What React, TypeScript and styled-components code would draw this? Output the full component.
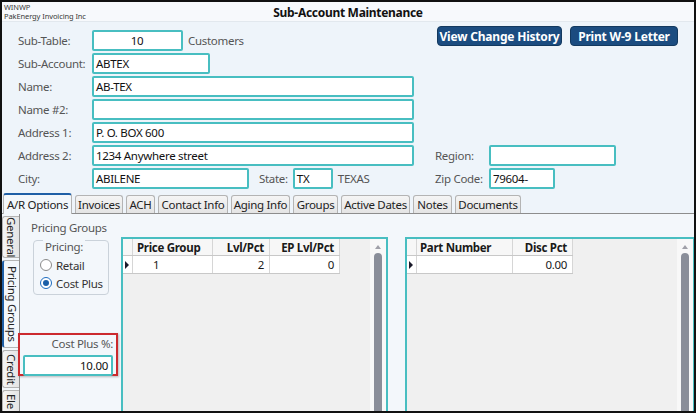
import React from "react";
import styled, { createGlobalStyle } from "styled-components";

const FONT = `"Noto Sans", "Open Sans", "DejaVu Sans", sans-serif`;
const TEAL = "#48bec1";

const Global = createGlobalStyle`
  html, body { margin: 0; padding: 0; background: #ffffff; }
  * { box-sizing: border-box; }
`;

const Window = styled.div`
  width: 696px;
  height: 413px;
  border: 2px solid #111;
  background: #eef4fa;
  display: flex;
  flex-direction: column;
  overflow: hidden;
  font-family: ${FONT};
  font-size: 11.5px;
  letter-spacing: -0.3px;
  color: #1e1e1e;
`;

const TitleBar = styled.div`
  height: 20px;
  flex: none;
  display: grid;
  grid-template-columns: 1fr auto 1fr;
  align-items: center;
  background: #f7f9fc;
  border-bottom: 1px solid #e2e8ee;
  padding: 0 2px;
`;

const AppInfo = styled.div`
  display: flex;
  flex-direction: column;
  font-size: 7.5px;
  line-height: 9px;
  letter-spacing: -0.1px;
  color: #3a3a3a;
`;

const Title = styled.div`
  font-weight: 700;
  font-size: 12px;
  color: #111;
  letter-spacing: -0.3px;
  padding-top: 1px;
`;

const FormGrid = styled.div`
  display: grid;
  grid-template-columns: 74px 343px 54px 1fr;
  grid-auto-rows: 21px;
  row-gap: 2px;
  padding: 8px 0 0 16px;
  flex: none;
`;

const Label = styled.div`
  display: flex;
  align-items: center;
  color: #555;
  white-space: nowrap;
`;

const Cell = styled.div<{ $span?: number }>`
  display: flex;
  align-items: center;
  gap: 5px;
  grid-column: span ${(p) => p.$span ?? 1};
`;

const Field = styled.div<{ $w: number; $align?: string }>`
  width: ${(p) => p.$w}px;
  height: 21px;
  flex: none;
  border: 2px solid ${TEAL};
  border-radius: 2px;
  background: #fff;
  display: flex;
  align-items: center;
  justify-content: ${(p) => p.$align ?? "flex-start"};
  padding: 0 3px 0 2px;
  color: #111;
  white-space: nowrap;
`;

const Muted = styled.span<{ $ml?: number }>`
  color: #555;
  margin-left: ${(p) => p.$ml ?? 0}px;
`;

const ButtonBar = styled.div`
  grid-column: 3 / span 2;
  align-self: start;
  margin-top: -4px;
  margin-left: 2px;
  display: flex;
  gap: 8px;
`;

const ActionButton = styled.div<{ $w: number }>`
  width: ${(p) => p.$w}px;
  height: 20px;
  border-radius: 4px;
  background: #1b4c80;
  border: 1px solid #13395f;
  color: #fff;
  font-weight: 700;
  font-size: 12px;
  display: flex;
  align-items: center;
  justify-content: center;
  white-space: nowrap;
  letter-spacing: -0.2px;
`;

const TabStrip = styled.div`
  margin-top: 4px;
  height: 21px;
  flex: none;
  display: flex;
  align-items: flex-end;
  gap: 3px;
  padding-left: 1px;
  border-bottom: 1px solid #8d8d8d;
`;

const Tab = styled.div<{ $w: number; $active?: boolean }>`
  width: ${(p) => p.$w}px;
  height: ${(p) => (p.$active ? 21 : 18)}px;
  margin-bottom: ${(p) => (p.$active ? -1 : 0)}px;
  border: 1px solid #b4b4b4;
  border-bottom: none;
  border-top: ${(p) => (p.$active ? "2px solid #1f5fa6" : "1px solid #b4b4b4")};
  border-radius: 3px 3px 0 0;
  background: ${(p) => (p.$active ? "#f3f7fb" : "linear-gradient(#f5f5f5, #e4e4e4)")};
  display: flex;
  align-items: center;
  justify-content: center;
  color: #222;
  white-space: nowrap;
`;

const TabBody = styled.div`
  flex: 1;
  display: flex;
  background: #f3f7fb;
  min-height: 0;
`;

const SideTabs = styled.div`
  width: 18px;
  flex: none;
  display: flex;
  flex-direction: column;
  gap: 2px;
  padding-top: 2px;
  border-right: 1px solid #8d8d8d;
  overflow: hidden;
`;

const SideTab = styled.div<{ $h: number; $active?: boolean; $open?: boolean }>`
  height: ${(p) => p.$h}px;
  flex: none;
  writing-mode: vertical-rl;
  display: flex;
  align-items: center;
  justify-content: ${(p) => (p.$open ? "flex-start" : "center")};
  padding-top: ${(p) => (p.$open ? 3 : 0)}px;
  border: 1px solid #b4b4b4;
  border-right: none;
  border-left: ${(p) => (p.$active ? "2px solid #1f5fa6" : "1px solid #b4b4b4")};
  border-radius: 3px 0 0 3px;
  background: ${(p) => (p.$active ? "#f3f7fb" : "linear-gradient(90deg, #f5f5f5, #e4e4e4)")};
  margin-right: ${(p) => (p.$active ? -1 : 0)}px;
  color: #222;
  white-space: nowrap;
  line-height: 14px;
  overflow: hidden;
`;

const PricingPanel = styled.div`
  width: 101px;
  flex: none;
  display: flex;
  flex-direction: column;
  padding: 7px 0 0 0;
`;

const PanelHeading = styled.div`
  color: #555;
  line-height: 14px;
  padding-left: 11px;
`;

const GroupBox = styled.fieldset`
  margin: -8px 0 0 13px;
  width: 76px;
  padding: 3px 0 2px 6px;
  border: 1px solid #cad2da;
  border-radius: 4px;
  display: flex;
  flex-direction: column;
  min-width: 0;
`;

const Legend = styled.legend`
  padding: 14px 2px 0 2px;
  margin-left: 3px;
  line-height: 12px;
  color: #555;
`;

const RadioRow = styled.div`
  height: 18px;
  display: flex;
  align-items: center;
  gap: 4px;
  color: #333;
`;

const RadioDot = styled.span<{ $on?: boolean }>`
  width: 12px;
  height: 12px;
  flex: none;
  border-radius: 50%;
  border: 1px solid ${(p) => (p.$on ? "#1c6cc0" : "#8a8a8a")};
  background: #fff;
  display: flex;
  align-items: center;
  justify-content: center;
  &::after {
    content: "";
    width: 6px;
    height: 6px;
    border-radius: 50%;
    background: ${(p) => (p.$on ? "#1a5fa8" : "transparent")};
  }
`;

const HighlightBox = styled.div`
  margin: 38px 0 0 -2px;
  width: 100px;
  height: 43px;
  border: 2px solid #cc2a2e;
  box-shadow: 1px 1px 2px rgba(0, 0, 0, 0.25);
  display: flex;
  flex-direction: column;
  align-items: flex-end;
  padding: 1px 3px 0 5px;
  gap: 4px;
`;

const GridsRow = styled.div`
  flex: 1;
  display: flex;
  gap: 17px;
  padding-top: 23px;
  min-width: 0;
`;

const DataGrid = styled.div<{ $w: number }>`
  width: ${(p) => p.$w}px;
  flex: none;
  border: 2px solid ${TEAL};
  border-bottom: none;
  background: #f0f0f0;
  display: flex;
`;

const TableArea = styled.div`
  flex: 1;
  display: flex;
  flex-direction: column;
`;

const Row = styled.div<{ $head?: boolean }>`
  display: flex;
  height: ${(p) => (p.$head ? 17 : 18)}px;
  background: ${(p) => (p.$head ? "#f7f7f7" : "#fff")};
  font-weight: ${(p) => (p.$head ? 700 : 400)};
  align-self: flex-start;
  border-bottom: 1px solid #c8c8c8;
`;

const GridCell = styled.div<{ $w: number; $align?: string; $pad?: number }>`
  width: ${(p) => p.$w}px;
  flex: none;
  display: flex;
  align-items: center;
  justify-content: ${(p) => p.$align ?? "flex-start"};
  padding: 0 ${(p) => p.$pad ?? 5}px;
  border-right: 1px solid #d6d6d6;
  white-space: nowrap;
  color: #1a1a1a;
`;

const Indicator = styled.div`
  width: 10px;
  flex: none;
  display: flex;
  align-items: center;
  justify-content: center;
  border-right: 1px solid #d6d6d6;
`;

const Arrow = styled.span`
  width: 0;
  height: 0;
  border-top: 4px solid transparent;
  border-bottom: 4px solid transparent;
  border-left: 4px solid #1a1a2a;
  margin-left: -1px;
`;

const ScrollBar = styled.div`
  width: 16px;
  flex: none;
  background: #f8f8f8;
  display: flex;
  flex-direction: column;
  align-items: center;
  padding-top: 6px;
  gap: 4px;
`;

const UpArrow = styled.span`
  width: 0;
  height: 0;
  border-left: 3.5px solid transparent;
  border-right: 3.5px solid transparent;
  border-bottom: 4px solid #a0a0a8;
`;

const Thumb = styled.div`
  width: 8px;
  flex: 1;
  background: #8a8e99;
  border-radius: 4px 4px 0 0;
`;

type Col = { title: string; w: number; align?: string; pad?: number; value: string };

const grid1: Col[] = [
  { title: "Price Group", w: 80, value: "1", pad: 4 },
  { title: "Lvl/Pct", w: 57, align: "flex-end", value: "2" },
  { title: "EP Lvl/Pct", w: 70, align: "flex-end", value: "0" },
];
const grid2: Col[] = [
  { title: "Part Number", w: 96, value: "", pad: 3 },
  { title: "Disc Pct", w: 60, align: "flex-end", value: "0.00" },
];

function Grid({ w, cols, firstPad }: { w: number; cols: Col[]; firstPad?: number }) {
  return (
    <DataGrid $w={w}>
      <TableArea>
        <Row $head>
          <Indicator />
          {cols.map((c) => (
            <GridCell key={c.title} $w={c.w} $align={c.align} $pad={c.pad}>
              {c.title}
            </GridCell>
          ))}
        </Row>
        <Row>
          <Indicator>
            <Arrow />
          </Indicator>
          {cols.map((c, i) => (
            <GridCell key={c.title} $w={c.w} $align={c.align} $pad={i === 0 ? firstPad ?? c.pad : c.pad}>
              {c.value}
            </GridCell>
          ))}
        </Row>
      </TableArea>
      <ScrollBar>
        <UpArrow />
        <Thumb />
      </ScrollBar>
    </DataGrid>
  );
}

const tabs: [string, number][] = [
  ["A/R Options", 69],
  ["Invoices", 48],
  ["ACH", 29],
  ["Contact Info", 70],
  ["Aging Info", 59],
  ["Groups", 45],
  ["Active Dates", 69],
  ["Notes", 39],
  ["Documents", 66],
];

export default function App() {
  return (
    <>
      <Global />
      <Window>
        <TitleBar>
          <AppInfo>
            <span>WINWP</span>
            <span>PakEnergy Invoicing Inc</span>
          </AppInfo>
          <Title>Sub-Account Maintenance</Title>
          <span />
        </TitleBar>

        <FormGrid>
          <Label>Sub-Table:</Label>
          <Cell>
            <Field $w={91} $align="center">10</Field>
            <Muted>Customers</Muted>
          </Cell>
          <ButtonBar>
            <ActionButton $w={125}>View Change History</ActionButton>
            <ActionButton $w={108}>Print W-9 Letter</ActionButton>
          </ButtonBar>

          <Label>Sub-Account:</Label>
          <Cell $span={3}>
            <Field $w={118}>ABTEX</Field>
          </Cell>

          <Label>Name:</Label>
          <Cell $span={3}>
            <Field $w={322}>AB-TEX</Field>
          </Cell>

          <Label>Name #2:</Label>
          <Cell $span={3}>
            <Field $w={322} />
          </Cell>

          <Label>Address 1:</Label>
          <Cell $span={3}>
            <Field $w={322}>P. O. BOX 600</Field>
          </Cell>

          <Label>Address 2:</Label>
          <Cell>
            <Field $w={322}>1234 Anywhere street</Field>
          </Cell>
          <Label>Region:</Label>
          <Cell>
            <Field $w={127} />
          </Cell>

          <Label>City:</Label>
          <Cell>
            <Field $w={157}>ABILENE</Field>
            <Muted $ml={5}>State:</Muted>
            <Field $w={40}>TX</Field>
            <Muted>TEXAS</Muted>
          </Cell>
          <Label>Zip Code:</Label>
          <Cell>
            <Field $w={66}>79604-</Field>
          </Cell>
        </FormGrid>

        <TabStrip>
          {tabs.map(([t, w], i) => (
            <Tab key={t} $w={w} $active={i === 0}>
              {t}
            </Tab>
          ))}
        </TabStrip>

        <TabBody>
          <SideTabs>
            <SideTab $h={42}>General</SideTab>
            <SideTab $h={88} $active>
              Pricing Groups
            </SideTab>
            <SideTab $h={38}>Credit</SideTab>
            <SideTab $h={40} $open>
              Ele
            </SideTab>
          </SideTabs>

          <PricingPanel>
            <PanelHeading>Pricing Groups</PanelHeading>
            <GroupBox>
              <Legend>Pricing:</Legend>
              <RadioRow>
                <RadioDot />
                Retail
              </RadioRow>
              <RadioRow>
                <RadioDot $on />
                Cost Plus
              </RadioRow>
            </GroupBox>
            <HighlightBox>
              <Muted>Cost Plus %:</Muted>
              <Field $w={90} $align="flex-end">10.00</Field>
            </HighlightBox>
          </PricingPanel>

          <GridsRow>
            <Grid w={267} cols={grid1} firstPad={20} />
            <Grid w={290} cols={grid2} />
          </GridsRow>
        </TabBody>
      </Window>
    </>
  );
}
